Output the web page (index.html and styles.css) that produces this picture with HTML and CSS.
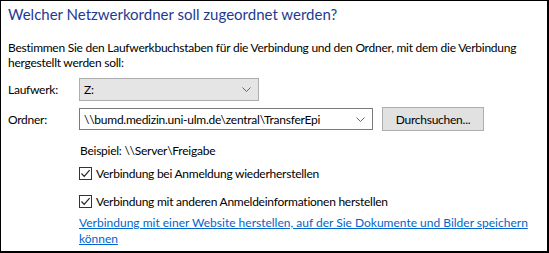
FILE: index.html
```html
<!DOCTYPE html>
<html lang="de">
<head>
<meta charset="UTF-8">
<meta name="viewport" content="width=device-width, initial-scale=1.0">
<title>Netzlaufwerk verbinden</title>
<link rel="stylesheet" href="styles.css">
</head>
<body>
<div class="dialog">
  <h1 class="main-title">Welcher Netzwerkordner soll zugeordnet werden?</h1>
  <p class="intro">Bestimmen Sie den Laufwerkbuchstaben für die Verbindung und den Ordner, mit dem die Verbindung hergestellt werden soll:</p>

  <div class="form">
    <label class="form-label">Laufwerk:</label>
    <div class="combo combo-drive">
      <span class="combo-text">Z:</span>
      <svg class="chevron" width="9" height="5" viewBox="0 0 9 5"><path d="M0.5 0.5 L4.5 4.5 L8.5 0.5" fill="none" stroke="#666" stroke-width="1"/></svg>
    </div>

    <label class="form-label">Ordner:</label>
    <div class="folder-row">
      <div class="combo combo-folder">
        <span class="combo-text">\\bumd.medizin.uni-ulm.de\zentral\TransferEpi</span>
        <svg class="chevron" width="9" height="5" viewBox="0 0 9 5"><path d="M0.5 0.5 L4.5 4.5 L8.5 0.5" fill="none" stroke="#666" stroke-width="1"/></svg>
      </div>
      <button class="browse-button">Durchsuchen...</button>
    </div>

    <span></span>
    <div class="options">
      <div class="example">Beispiel: \\Server\Freigabe</div>
      <label class="check-row">
        <span class="checkbox"><svg width="11" height="11" viewBox="0 0 11 11"><path d="M1.5 5.5 L4.2 8.3 L9.6 2.2" fill="none" stroke="#222" stroke-width="1.2"/></svg></span>
        Verbindung bei Anmeldung wiederherstellen
      </label>
      <label class="check-row">
        <span class="checkbox"><svg width="11" height="11" viewBox="0 0 11 11"><path d="M1.5 5.5 L4.2 8.3 L9.6 2.2" fill="none" stroke="#222" stroke-width="1.2"/></svg></span>
        Verbindung mit anderen Anmeldeinformationen herstellen
      </label>
      <a class="link" href="#">Verbindung mit einer Website herstellen, auf der Sie Dokumente und Bilder speichern können</a>
    </div>
  </div>
</div>
</body>
</html>
```

FILE: styles.css
```css
html, body {
  margin: 0;
  padding: 0;
}

body {
  width: 549px;
  height: 253px;
  box-sizing: border-box;
  border-top: 1px solid #000;
  border-left: 1px solid #000;
  border-right: 2px solid #000;
  border-bottom: 2px solid #000;
  background: #fff;
  font-family: Lato, "Noto Sans", sans-serif;
  font-size: 12px;
  letter-spacing: -0.25px;
  color: #000;
  overflow: hidden;
}

.dialog {
  padding: 0 0 0 7px;
}

.main-title {
  margin: 0;
  padding-top: 2px;
  font-size: 15px;
  font-weight: normal;
  letter-spacing: 0;
  line-height: 22px;
  color: #1e3a92;
}

.intro {
  margin: 15px 0 0 0;
  line-height: 15px;
  width: 530px;
}

.form {
  display: grid;
  grid-template-columns: 71px 1fr;
  row-gap: 6px;
  margin-top: 8px;
  align-items: center;
}

.form-label {
  line-height: 15px;
}

.combo {
  box-sizing: border-box;
  height: 23px;
  display: flex;
  align-items: center;
  justify-content: space-between;
  padding: 0 7px 0 4px;
  border: 1px solid #adadad;
}

.combo-drive {
  width: 180px;
  background: #e5e5e5;
}

.combo-folder {
  width: 294px;
  height: 22px;
  background: #fff;
  border-color: #7a7a7a;
}

.combo-text {
  white-space: nowrap;
}

.folder-row {
  display: flex;
  align-items: center;
  gap: 9px;
}

.browse-button {
  box-sizing: border-box;
  height: 24px;
  width: 102px;
  border: 1px solid #adadad;
  background: #e1e1e1;
  font-family: inherit;
  font-size: 12px;
  letter-spacing: -0.25px;
  padding: 0;
  color: #000;
}

.options {
  display: flex;
  flex-direction: column;
  padding-top: 6px;
}

.example {
  line-height: 15px;
  margin-left: 1px;
  margin-bottom: 8px;
}

.check-row {
  display: flex;
  align-items: center;
  gap: 4px;
  line-height: 15px;
  margin-bottom: 13px;
}

.checkbox {
  box-sizing: border-box;
  width: 13px;
  height: 13px;
  border: 1px solid #333;
  display: flex;
  align-items: center;
  justify-content: center;
  background: #fff;
}

.link {
  color: #0066cc;
  letter-spacing: 0;
  line-height: 16px;
  width: 460px;
  margin-top: -7px;
}
```
